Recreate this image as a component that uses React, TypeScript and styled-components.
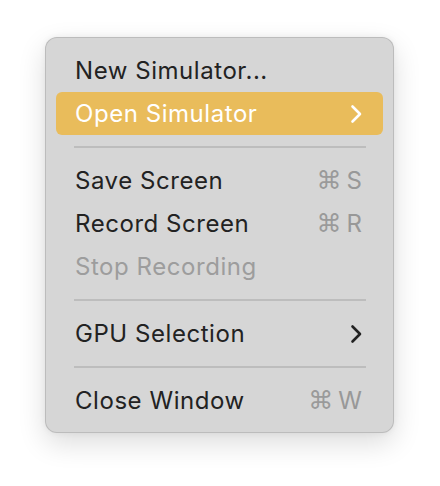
import React from "react";
import styled, { createGlobalStyle } from "styled-components";

const Global = createGlobalStyle`
  html, body { margin: 0; padding: 0; background: #ffffff; }
  body { font-family: Inter, "Noto Sans", sans-serif; -webkit-font-smoothing: antialiased; }
`;

const Page = styled.div`
  width: 440px;
  height: 486px;
  padding: 37px 0 0 45px;
  box-sizing: border-box;
`;

const Menu = styled.div`
  width: 349px;
  box-sizing: border-box;
  padding: 11px 10px 10px;
  background: #d6d6d6;
  border: 1px solid rgba(0, 0, 0, 0.12);
  border-radius: 12px;
  box-shadow: 0 10px 28px rgba(0, 0, 0, 0.14), 0 0 6px rgba(0, 0, 0, 0.06);
  display: flex;
  flex-direction: column;
`;

const Row = styled.div<{ $active?: boolean; $disabled?: boolean }>`
  height: 43px;
  display: flex;
  align-items: center;
  justify-content: space-between;
  padding: 0 21px 0 19px;
  border-radius: 6px;
  font-size: 24px;
  letter-spacing: 0.55px;
  background: ${(p) => (p.$active ? "#e9bc5b" : "transparent")};
  color: ${(p) => (p.$active ? "#ffffff" : p.$disabled ? "#9d9d9d" : "#222222")};
`;

const Label = styled.span`
  line-height: 1;
  padding-top: 1px;
`;

const Shortcut = styled.span`
  color: #989898;
  font-size: 24px;
  letter-spacing: 0;
  line-height: 1;
  display: flex;
  align-items: center;
  gap: 5px;
`;

const Cmd = styled.span`
  font-family: "DejaVu Sans", sans-serif;
  font-size: 25px;
  color: #9a9a9a;
`;

const Separator = styled.div`
  height: 2px;
  margin: 11px 17px 11px 18px;
  background: #bdbdbd;
`;

const Chevron = ({ color }: { color: string }) => (
  <svg width="13" height="20" viewBox="0 0 13 20" style={{ marginRight: -1 }}>
    <path d="M2.5 2.5 L10 10 L2.5 17.5" fill="none" stroke={color} strokeWidth="2.6" strokeLinecap="round" strokeLinejoin="round" />
  </svg>
);

export default function App() {
  return (
    <>
      <Global />
      <Page>
        <Menu>
          <Row><Label>New Simulator...</Label></Row>
          <Row $active><Label>Open Simulator</Label><Chevron color="#ffffff" /></Row>
          <Separator />
          <Row><Label>Save Screen</Label><Shortcut><Cmd>⌘</Cmd>S</Shortcut></Row>
          <Row><Label>Record Screen</Label><Shortcut><Cmd>⌘</Cmd>R</Shortcut></Row>
          <Row $disabled><Label>Stop Recording</Label></Row>
          <Separator />
          <Row><Label>GPU Selection</Label><Chevron color="#222222" /></Row>
          <Separator />
          <Row><Label>Close Window</Label><Shortcut><Cmd>⌘</Cmd>W</Shortcut></Row>
        </Menu>
      </Page>
    </>
  );
}
